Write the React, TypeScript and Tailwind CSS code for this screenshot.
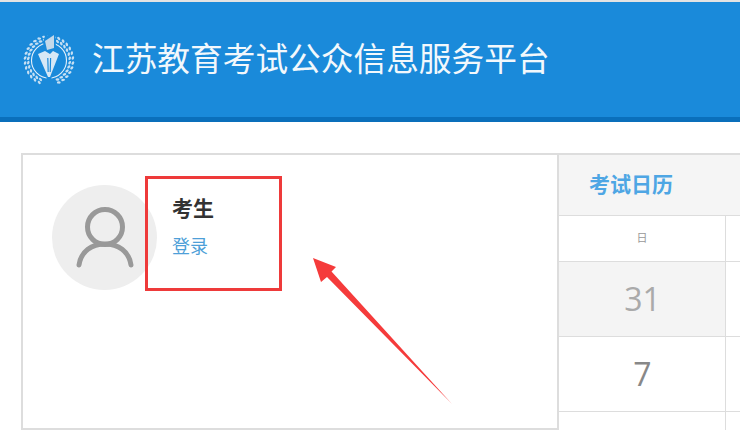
import React from "react";

const cjk = "font-['Inter','Noto_Sans_CJK_SC',sans-serif]";

function Logo() {
  const leaves = [];
  for (let a = 24; a <= 336; a += 12) {
    const r = (a * Math.PI) / 180;
    for (const rad of [24, 20.8]) {
      const x = 26 + Math.sin(r) * rad;
      const y = 27.5 + Math.cos(r) * rad;
      leaves.push(<ellipse key={`${a}-${rad}`} cx={x} cy={y} rx={1.9} ry={1.2} fill="#d9e9f6" opacity={0.9} transform={`rotate(${-a + 25} ${x} ${y})`} />);
    }
  }
  return (
    <svg width="52" height="54" viewBox="0 0 52 54" fill="none">
      {leaves}
      <circle cx="26" cy="27.5" r="17.5" stroke="#e6f1fa" strokeWidth="1.1" />
      <path d="M13 19 L24 46 L28 46 L39 19 L33 15 L32 0 L22 3 L20 9 L21 15 Z" fill="#1a8ada" />
      <path d="M15 21 L25 44 L27 44 L36 21 L30 18 L27 21 L22 18 Z" fill="#d6e8f6" />
      <path d="M22 8 L31 2 L31 15 L24 17 Z" fill="#c4d9ea" />
      <path d="M24.8 25 L25.2 39 M27.6 25 L27.2 39" stroke="#1a8ada" strokeWidth="1.2" />
    </svg>
  );
}

function Avatar() {
  return (
    <div className="w-[105px] h-[105px] rounded-full bg-[#eeeeee] flex items-center justify-center shrink-0">
      <svg width="60" height="66" viewBox="0 0 60 66" fill="none" stroke="#999999" strokeWidth="5" strokeLinecap="round">
        <circle cx="30" cy="22" r="17.5" />
        <path d="M4 60 C6 46 17 39 30 39 C43 39 54 46 56 60" />
      </svg>
    </div>
  );
}

function Calendar() {
  return (
    <div className="flex-1 min-w-0 border-t-2 border-[#dddddd] overflow-hidden">
      <div className="h-[61px] bg-[#f5f5f5] border-b border-[#dddddd] flex items-center pl-[30px]">
        <span className="text-[21px] font-bold text-[#4ea6e4]">考试日历</span>
      </div>
      <div className="grid grid-cols-[167px_1fr] font-['Open_Sans','Noto_Sans_CJK_SC',sans-serif]">
        <div className="h-[46px] border-r border-b border-[#dddddd] flex items-center justify-center text-[11px] text-[#999999]">日</div>
        <div className="h-[46px] border-b border-[#dddddd]" />
        <div className="h-[75px] bg-[#f4f4f4] border-r border-b border-[#dddddd] flex items-center justify-center text-[32px] text-[#aaaaaa] pl-[1px]">31</div>
        <div className="h-[75px] border-b border-[#dddddd]" />
        <div className="h-[75px] border-r border-b border-[#dddddd] flex items-center justify-center text-[32px] text-[#888888] pl-[1px]">7</div>
        <div className="h-[75px] border-b border-[#dddddd]" />
        <div className="h-[30px] border-r border-[#dddddd]" />
      </div>
    </div>
  );
}

export default function App() {
  return (
    <div className={`relative w-[740px] h-[430px] overflow-hidden bg-white ${cjk}`}>
      <div className="h-[2px] bg-[#e3e3e3]" />
      <header className="h-[120px] bg-[#1a8ada] border-b-[5px] border-[#0a6fbb] flex items-center pl-[23px] gap-[17px]">
        <Logo />
        <h1 className="text-[32.7px] leading-none font-normal text-[#f2f8fc] whitespace-nowrap">江苏教育考试公众信息服务平台</h1>
      </header>

      <div className="flex mt-[31px] pl-[21px] h-[280px]">
        <div className="w-[538px] h-[277px] border-2 border-[#dddddd] shrink-0 flex pt-[30px] pl-[29px] gap-[15px]">
          <Avatar />
          <div className="pt-[10px]">
            <div className="text-[21px] leading-[28px] font-bold text-[#333333]">考生</div>
            <a className="block mt-[12px] text-[18px] leading-[24px] text-[#4e9fd8]">登录</a>
          </div>
        </div>
        <Calendar />
      </div>

      {/* annotation drawn on top of the screenshot */}
      <div className="absolute left-[145px] top-[176px] w-[137px] h-[115px] border-[3px] border-[#ee3a3a]" />
      <svg className="absolute left-0 top-0" width="740" height="430" fill="none">
        <path d="M313 258 L336 267 L331.5 271.5 L452 404 L327 277 L321 282 Z" fill="#f53b3b" />
      </svg>
    </div>
  );
}
